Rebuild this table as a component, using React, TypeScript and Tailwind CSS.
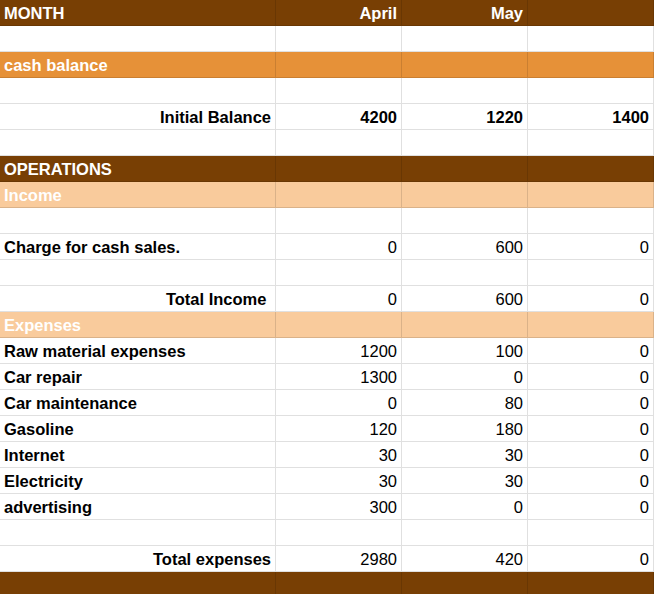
type Tone = "white" | "brown" | "orange" | "peach";

type Row = {
  tone: Tone;
  label?: string;
  labelRight?: boolean;
  values?: (string | number)[];
  boldValues?: boolean;
};

const rows: Row[] = [
  { tone: "brown", label: "MONTH", values: ["April", "May", ""], boldValues: true },
  { tone: "white" },
  { tone: "orange", label: "cash balance" },
  { tone: "white" },
  { tone: "white", label: "Initial Balance", labelRight: true, values: [4200, 1220, 1400], boldValues: true },
  { tone: "white" },
  { tone: "brown", label: "OPERATIONS" },
  { tone: "peach", label: "Income" },
  { tone: "white" },
  { tone: "white", label: "Charge for cash sales.", values: [0, 600, 0] },
  { tone: "white" },
  { tone: "white", label: "Total Income ", labelRight: true, values: [0, 600, 0] },
  { tone: "peach", label: "Expenses" },
  { tone: "white", label: "Raw material expenses", values: [1200, 100, 0] },
  { tone: "white", label: "Car repair", values: [1300, 0, 0] },
  { tone: "white", label: "Car maintenance", values: [0, 80, 0] },
  { tone: "white", label: "Gasoline", values: [120, 180, 0] },
  { tone: "white", label: "Internet", values: [30, 30, 0] },
  { tone: "white", label: "Electricity", values: [30, 30, 0] },
  { tone: "white", label: "advertising", values: [300, 0, 0] },
  { tone: "white" },
  { tone: "white", label: "Total expenses", labelRight: true, values: [2980, 420, 0] },
  { tone: "brown" },
];

const toneBg: Record<Tone, string> = {
  white: "bg-white text-black",
  brown: "bg-[#783f04] text-white",
  orange: "bg-[#e69138] text-white",
  peach: "bg-[#f9cb9c] text-white",
};

function Cell({
  tone,
  children,
  right,
  bold,
}: {
  tone: Tone;
  children?: React.ReactNode;
  right?: boolean;
  bold?: boolean;
}) {
  return (
    <div
      className={`h-[26px] border-r border-b border-black/[0.12] px-1 pt-[1px] leading-[24px] whitespace-pre overflow-hidden ${toneBg[tone]} ${right ? "text-right pr-[4px]" : "text-left"} ${bold ? "font-bold" : "font-normal"}`}
    >
      {children}
    </div>
  );
}

export default function App() {
  return (
    <div className="w-[655px] h-[594px] overflow-hidden bg-white font-['Liberation_Sans',Arial,sans-serif] text-[16.5px]">
      <div className="grid grid-cols-[276px_126px_126px_126px]">
        {rows.map((row, i) => (
          <div key={i} className="contents">
            <Cell tone={row.tone} right={row.labelRight} bold>
              {row.label}
            </Cell>
            {[0, 1, 2].map((j) => (
              <Cell key={j} tone={row.tone} right bold={row.boldValues}>
                {row.values ? row.values[j] : ""}
              </Cell>
            ))}
          </div>
        ))}
      </div>
    </div>
  );
}
